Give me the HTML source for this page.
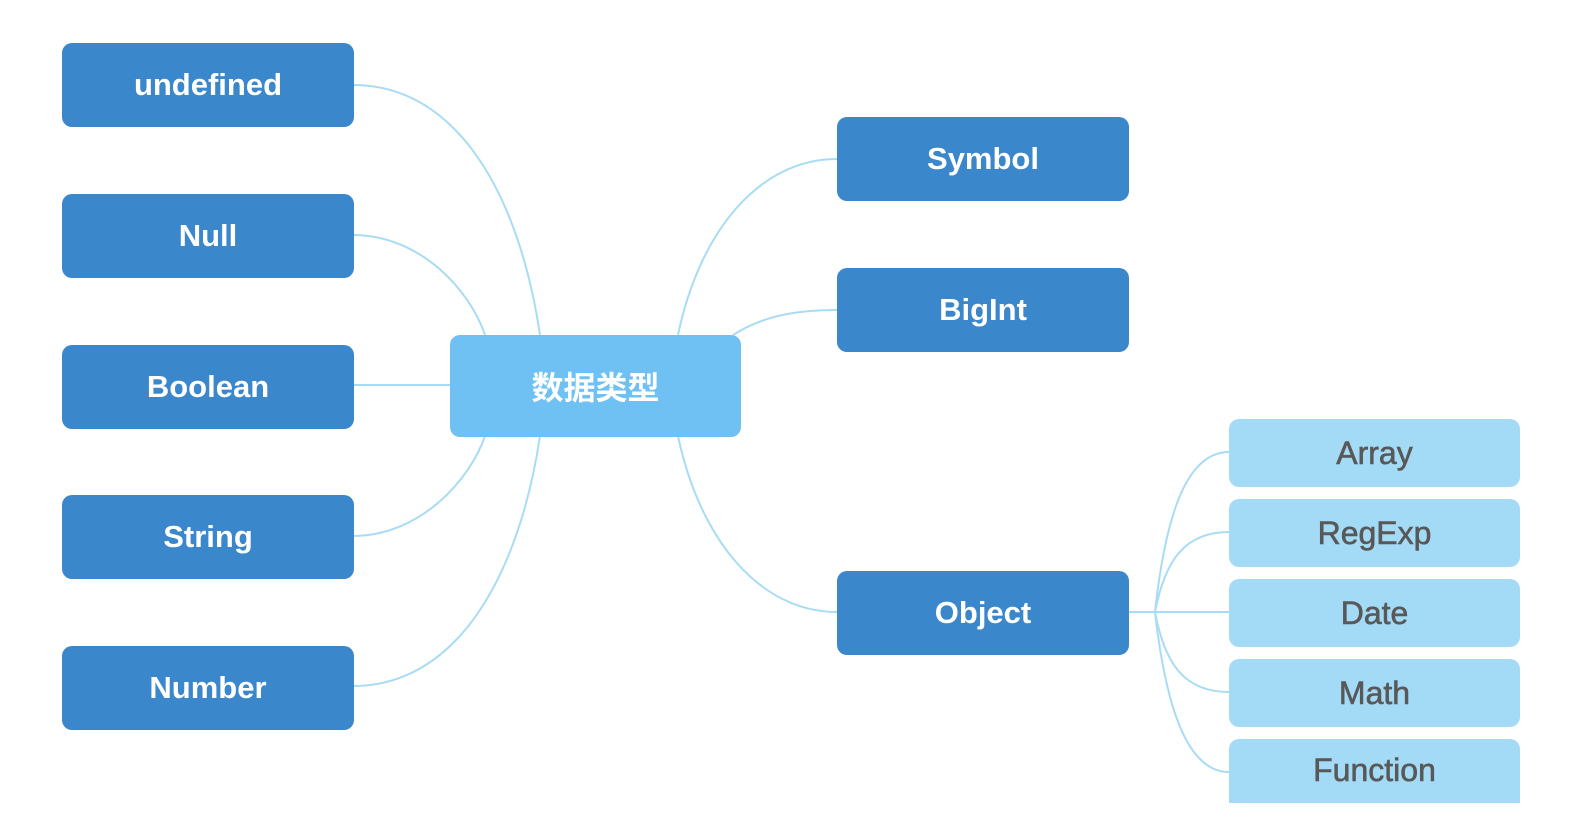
<!DOCTYPE html>
<html><head><meta charset="utf-8"><style>
html,body{margin:0;padding:0;background:#fff;width:1570px;height:828px;overflow:hidden;position:relative;font-family:"Liberation Sans","Noto Sans CJK SC",sans-serif}
.b{position:absolute;display:flex;align-items:center;justify-content:center;border-radius:10px;font-size:31px;font-weight:bold;box-sizing:border-box}
.d{background:#3a87cb;color:#fff;width:292px;height:84px}
.s{background:#a3daf5;color:#585858;width:291px;height:68px;font-weight:normal;font-size:32px;-webkit-text-stroke:0.6px #585858}
svg{position:absolute;left:0;top:0}
</style></head><body>
<svg width="1570" height="828" fill="none" stroke="#a8dcf5" stroke-width="2">
<path d="M353 85 C460 85 520 200 540 335"/>
<path d="M353 235 C420 235 470 290 485 335"/>
<path d="M353 385 L450 385"/>
<path d="M353 536 C420 536 470 480 485 436"/>
<path d="M353 686 C460 686 520 570 540 436"/>
<path d="M678 335 C700 230 760 159 837 159"/>
<path d="M733 335 C760 318 790 310 837 310"/>
<path d="M678 436 C700 540 760 612 837 612"/>
<path d="M1128 612 L1229 612"/>
<path d="M1155 612 C1165 520 1185 452 1229 452"/>
<path d="M1155 612 C1165 560 1185 532 1229 532"/>
<path d="M1155 612 C1165 665 1185 692 1229 692"/>
<path d="M1155 612 C1165 700 1185 772 1229 772"/>
</svg>
<div class="b d" style="left:62px;top:43px">undefined</div>
<div class="b d" style="left:62px;top:194px">Null</div>
<div class="b d" style="left:62px;top:345px">Boolean</div>
<div class="b d" style="left:62px;top:495px">String</div>
<div class="b d" style="left:62px;top:646px">Number</div>
<div class="b" style="left:450px;top:335px;width:291px;height:102px;background:#6ec1f2;color:#fff;font-weight:bold;font-size:32px">数据类型</div>
<div class="b d" style="left:837px;top:117px">Symbol</div>
<div class="b d" style="left:837px;top:268px">BigInt</div>
<div class="b d" style="left:837px;top:571px">Object</div>
<div class="b s" style="left:1229px;top:419px">Array</div>
<div class="b s" style="left:1229px;top:499px">RegExp</div>
<div class="b s" style="left:1229px;top:579px">Date</div>
<div class="b s" style="left:1229px;top:659px">Math</div>
<div class="b s" style="left:1229px;top:739px;height:64px;border-radius:10px 10px 0 0;align-items:flex-start;padding-top:13px">Function</div>
</body></html>
